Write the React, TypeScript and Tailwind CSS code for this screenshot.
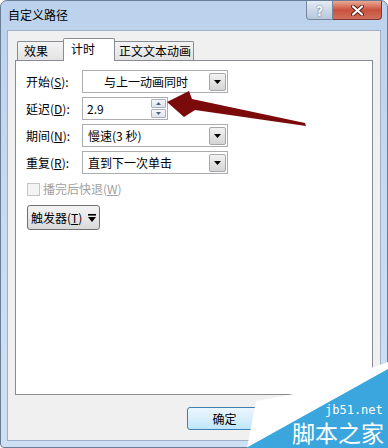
import React from "react";

const font = { fontFamily: '"Noto Sans CJK SC", "Noto Sans", sans-serif' };

function DropBtn() {
  return (
    <div className="w-[17px] h-[18px] mr-[1px] flex items-center justify-center border border-[#a7a7a7] rounded-[2px] bg-gradient-to-b from-[#f2f2f2] to-[#d4d4d4]">
      <svg width="7" height="4" viewBox="0 0 7 4">
        <path d="M0 0H7L3.5 4Z" fill="#000" />
      </svg>
    </div>
  );
}

function Combo({ text, center }: { text: string; center?: boolean }) {
  return (
    <div className="w-[146px] h-[23px] border border-[#abadb3] bg-white flex items-center">
      <div className={"flex-1 text-[12px] text-black leading-none " + (center ? "text-center" : "pl-[5px]")}>{text}</div>
      <DropBtn />
    </div>
  );
}

function Label({ pre, k }: { pre: string; k: string }) {
  return (
    <div className="w-[56px] text-[12px] text-black leading-none">
      {pre}(<span className="underline">{k}</span>):
    </div>
  );
}

export default function App() {
  return (
    <div className="relative w-[388px] h-[448px] overflow-hidden bg-white" style={font}>
      <div className="w-[388px] h-[448px] flex flex-col border border-[#6a7d96] rounded-t-[7px] rounded-b-[4px] bg-gradient-to-b from-[#bcd2ec] via-[#c8dbf1] to-[#cfe0f4]">
        {/* title bar */}
        <div className="h-[29px] flex items-start">
          <div className="pl-[7px] pt-[6px] text-[12px] text-black leading-[16px]">自定义路径</div>
          <div className="ml-auto mr-[5px] flex">
            <div className="w-[27px] h-[19px] border border-[#75869e] border-t-0 rounded-bl-[4px] bg-gradient-to-b from-[#e4ecf6] via-[#cdd9e8] to-[#b7c7dc] flex items-center justify-center text-[13px] font-bold text-white leading-none" style={{ textShadow: "0 0 2px #44546a" }}>?</div>
            <div className="w-[49px] h-[19px] border border-[#7a3a33] border-l-0 border-t-0 rounded-br-[4px] bg-gradient-to-b from-[#e9a996] via-[#c9513d] to-[#d0705c] flex items-center justify-center">
              <svg width="13" height="11" viewBox="0 0 13 11">
                <path d="M2 1.5L11 9.5M11 1.5L2 9.5" stroke="#5a1d14" strokeWidth="4" strokeLinecap="round" />
                <path d="M2 1.5L11 9.5M11 1.5L2 9.5" stroke="#fff" strokeWidth="2.2" strokeLinecap="round" />
              </svg>
            </div>
          </div>
        </div>
        {/* client */}
        <div className="mx-[6px] h-[411px] border border-[#9db0c7] bg-[#f0f0f0] flex flex-col px-[7px] pt-[6px]">
          {/* tabs */}
          <div className="h-[23px] flex items-end pl-[2px] relative z-10">
            <div className="w-[46px] h-[19px] border border-[#898c95] border-r-0 border-b-0 rounded-tl-[2px] bg-gradient-to-b from-[#f3f3f3] to-[#e3e3e3] text-[12px] text-black leading-none pl-[6px] pt-[3px]">效果</div>
            <div className="w-[52px] h-[23px] -mb-[1px] border border-[#898c95] border-b-0 rounded-t-[2px] bg-white text-[12px] text-black leading-none pl-[7px] pt-[4px]">计时</div>
            <div className="w-[79px] h-[19px] border border-[#898c95] border-l-0 border-b-0 rounded-tr-[2px] bg-gradient-to-b from-[#f3f3f3] to-[#e3e3e3] text-[12px] text-black leading-none pl-[4px] pt-[3px]">正文文本动画</div>
          </div>
          {/* panel */}
          <div className="h-[335px] border border-[#898c95] bg-white flex flex-col pl-[10px] pt-[9px]">
            <div className="flex items-center h-[23px]">
              <Label pre="开始" k="S" />
              <Combo text="与上一动画同时" center />
            </div>
            <div className="flex items-center h-[23px] mt-[4px]">
              <Label pre="延迟" k="D" />
              <div className="w-[86px] h-[23px] border border-[#abadb3] bg-white flex items-center">
                <div className="flex-1 pl-[4px] text-[12px] text-black leading-none">2.9</div>
                <div className="flex flex-col gap-[1px] mr-[1px]">
                  {[0, 1].map((i) => (
                    <div key={i} className="w-[15px] h-[9px] border border-[#a9b2c1] rounded-[1px] bg-gradient-to-b from-[#f6f7f9] to-[#e0e4ea] flex items-center justify-center">
                      <svg width="5" height="3" viewBox="0 0 5 3">
                        <path d={i === 0 ? "M0 3H5L2.5 0Z" : "M0 0H5L2.5 3Z"} fill="#4d6185" />
                      </svg>
                    </div>
                  ))}
                </div>
              </div>
            </div>
            <div className="flex items-center h-[23px] mt-[4px]">
              <Label pre="期间" k="N" />
              <Combo text="慢速(3 秒)" />
            </div>
            <div className="flex items-center h-[23px] mt-[4px]">
              <Label pre="重复" k="R" />
              <Combo text="直到下一次单击" />
            </div>
            <div className="flex items-center mt-[8px] h-[14px] ml-[1px]">
              <div className="w-[13px] h-[13px] border border-[#c5c5c5] bg-[#f4f4f4]" />
              <div className="ml-[3px] text-[12px] text-[#a0a0a0] leading-none">播完后快退(<span className="underline">W</span>)</div>
            </div>
            <div className="mt-[9px] ml-[1px] w-[73px] h-[25px] border border-[#707070] rounded-[3px] bg-gradient-to-b from-[#f4f4f4] via-[#e8e8e8] to-[#d8d8d8] flex items-center pl-[3px]">
              <span className="text-[12px] text-black leading-none">触发器(<span className="underline">T</span>)</span>
              <svg className="ml-[6px]" width="8" height="8" viewBox="0 0 8 8">
                <path d="M0 0H8V1.6H0Z" fill="#000" />
                <path d="M0 3H8L4 8Z" fill="#000" />
              </svg>
            </div>
          </div>
          {/* bottom buttons */}
          <div className="flex pt-[12px] pl-[172px]">
            <div className="w-[75px] h-[23px] border border-[#3c7fb1] rounded-[3px] bg-gradient-to-b from-[#eaf6fd] via-[#d9eefb] to-[#bee6fd] flex items-center justify-center text-[12px] text-black leading-none">确定</div>
          </div>
        </div>
      </div>

      {/* overlay: arrow + watermark */}
      <svg className="absolute left-0 top-0 pointer-events-none" width="388" height="448" viewBox="0 0 388 448">
        <polygon points="167,102 189,91 192,99 305,123 306,126 195,110 184,117" fill="#7b0a0a" />
        <polygon points="256,401 299,393 388,362 388,371 247,448" fill="#ffffff" />
        <polygon points="388,369 388,448 246,448" fill="#3ba6dd" />
      </svg>
      <div className="absolute left-[325px] top-[404px] text-[12px] leading-none text-white pointer-events-none" style={{ fontFamily: '"DejaVu Sans Mono", monospace' }}>jb51.net</div>
      <div className="absolute left-[292px] top-[421px] text-[23px] leading-none text-white pointer-events-none" style={font}>脚本之家</div>
    </div>
  );
}
